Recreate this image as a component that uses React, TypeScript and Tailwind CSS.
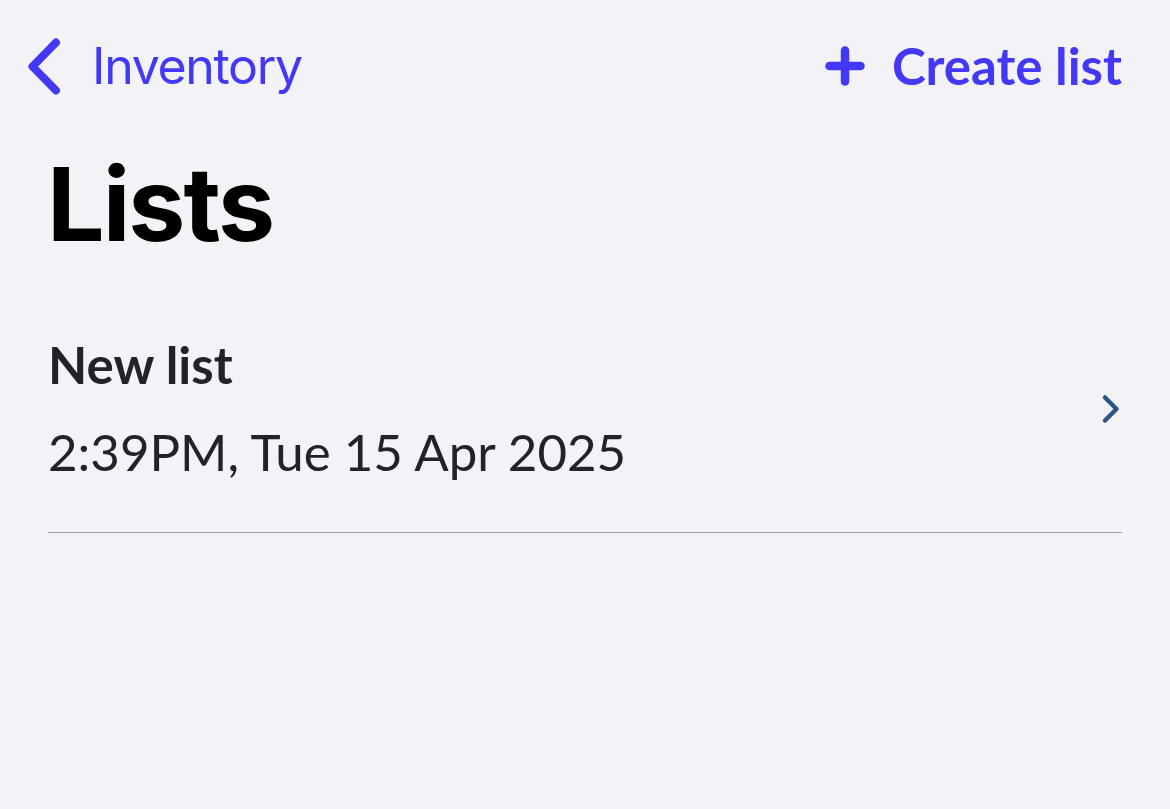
export default function App() {
  const inter = { fontFamily: "Inter, 'Noto Sans', sans-serif" };
  const lato = { fontFamily: "Lato, 'Noto Sans', sans-serif" };
  return (
    <div className="w-[1170px] h-[809px] bg-[#f3f2f6] overflow-hidden">
      <div className="flex items-center justify-between h-[60px] mt-[36px] pl-[28px] pr-[48px]">
        <div className="flex items-center text-[#4338f5]">
          <svg width="33" height="57" viewBox="0 0 33 57" className="shrink-0">
            <path d="M28 4.5 L4.5 28.5 L28 52.5" stroke="currentColor" strokeWidth="8" fill="none" strokeLinecap="round" strokeLinejoin="round" />
          </svg>
          <span className="ml-[31px] text-[50px] leading-[60px] tracking-[-1.3px]" style={inter}>Inventory</span>
        </div>
        <div className="flex items-center text-[#4338f5]">
          <svg width="40" height="40" viewBox="0 0 40 40" className="shrink-0">
            <path d="M4.5 20 H35.5 M20 4.5 V35.5" stroke="currentColor" strokeWidth="8.5" fill="none" strokeLinecap="round" />
          </svg>
          <span className="ml-[27px] text-[51px] leading-[60px] font-bold" style={lato}>Create list</span>
        </div>
      </div>
      <h1 className="mt-[57px] pl-[47px] text-[102px] leading-[102px] font-bold text-black tracking-[-2px]" style={inter}>Lists</h1>
      <div className="mx-[48px] mt-[80px]">
        <div className="flex items-center justify-between">
          <div className="flex flex-col text-[#232226]" style={lato}>
            <span className="text-[51px] leading-[60px] font-bold">New list</span>
            <span className="mt-[27px] text-[51px] leading-[60px]">2:39PM, Tue 15 Apr 2025</span>
          </div>
          <svg width="20" height="30" viewBox="0 0 20 30" className="shrink-0 text-[#2c5684] mr-[1px]">
            <path d="M4 3.5 L15.5 15 L4 26.5" stroke="currentColor" strokeWidth="4.5" fill="none" strokeLinecap="round" strokeLinejoin="round" />
          </svg>
        </div>
        <div className="mt-[50px] h-px bg-[#a4a4a8]" />
      </div>
    </div>
  );
}
